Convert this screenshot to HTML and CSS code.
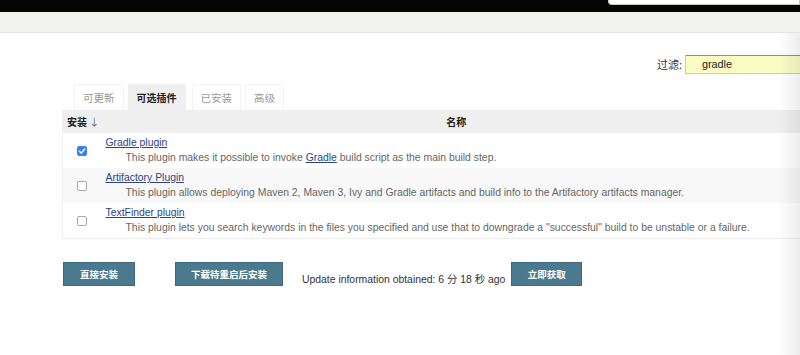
FILE: index.html
```html
<!DOCTYPE html>
<html>
<head lang="zh">
    <meta charset="UTF-8">
    <title>插件管理</title>
    <link rel="stylesheet" href="styles.css">
</head>
<body>
    <div id="page">
        <div class="topbar">
            <div class="search"></div>
        </div>
        <div class="subbar"></div>
        <div class="main">
            <div class="filter">
                <label>过滤:</label><input type="text" class="filterBox" value="gradle">
            </div>
            <div class="tabs">
                <span class="tab">可更新</span>
                <span class="tab active">可选插件</span>
                <span class="tab">已安装</span>
                <span class="tab">高级</span>
            </div>
            <table class="plugins">
                <tr class="head">
                    <th class="colInstall">安装 <span class="arrow">↓</span></th>
                    <th class="colName">名称</th>
                </tr>
                <tr>
                    <td class="colInstall"><span class="check on"><svg width="10" height="10" viewBox="0 0 10 10"><path d="M2.4 5.2 L4.2 7 L7.7 3" fill="none" stroke="#fff" stroke-width="1.4" stroke-linecap="round" stroke-linejoin="round"/></svg></span></td>
                    <td class="colName">
                        <a href="#" class="pName">Gradle plugin</a>
                        <p class="pDesc">This plugin makes it possible to invoke <a href="#">Gradle</a> build script as the main build step.</p>
                    </td>
                </tr>
                <tr class="odd">
                    <td class="colInstall"><span class="check"></span></td>
                    <td class="colName">
                        <a href="#" class="pName">Artifactory Plugin</a>
                        <p class="pDesc">This plugin allows deploying Maven 2, Maven 3, Ivy and Gradle artifacts and build info to the Artifactory artifacts manager.</p>
                    </td>
                </tr>
                <tr>
                    <td class="colInstall"><span class="check"></span></td>
                    <td class="colName">
                        <a href="#" class="pName">TextFinder plugin</a>
                        <p class="pDesc">This plugin lets you search keywords in the files you specified and use that to downgrade a "successful" build to be unstable or a failure.</p>
                    </td>
                </tr>
            </table>
            <div class="actions">
                <span class="btn btnInstall">直接安装</span>
                <span class="btn btnLater">下载待重启后安装</span>
                <span class="updInfo">Update information obtained: 6 分 18 秒 ago</span>
                <span class="btn btnFetch">立即获取</span>
            </div>
        </div>
        <div class="edgeShade"></div>
    </div>
</body>
</html>
```
FILE: styles.css
```css
*{
    margin: 0;
    padding: 0;
    box-sizing: border-box;
}
html, body{
    width: 800px;
    height: 355px;
    overflow: hidden;
    background: #ffffff;
}
body{
    font-family: "Liberation Sans", "Noto Sans CJK SC", sans-serif;
    font-size: 10.4px;
    color: #333333;
}
div#page{
    position: relative;
    width: 800px;
    height: 355px;
}
.topbar{
    height: 12px;
    background: #050505;
    display: flex;
    justify-content: flex-end;
    align-items: flex-start;
}
.search{
    width: 192px;
    height: 5px;
    background: #ffffff;
    border: solid 1px #c8c8c8;
    border-top: none;
    border-radius: 0 0 0 4px;
}
.subbar{
    height: 21px;
    background: #f2f3ee;
    border-bottom: solid 1px #e3e5de;
}
.main{
    padding-left: 62px;
}
.filter{
    display: flex;
    justify-content: flex-end;
    align-items: center;
    margin-top: 21px;
    height: 20px;
}
.filter label{
    font-family: "Noto Sans CJK SC", sans-serif;
    font-size: 11px;
    color: #333333;
    margin-right: 3px;
}
.filterBox{
    width: 115px;
    height: 19px;
    background: #fbfcc4;
    border: solid 1px #c9c9c9;
    border-top-color: #8e8e8e;
    border-right: none;
    padding-left: 16px;
    font-family: "Liberation Sans", sans-serif;
    font-size: 10.8px;
    color: #222222;
    outline: none;
}
.tabs{
    display: flex;
    margin-top: 10px;
    margin-left: 12px;
    height: 26px;
}
.tab{
    font-family: "Noto Sans CJK SC", sans-serif;
    font-size: 10.5px;
    color: #9a9a9a;
    line-height: 25px;
    padding: 0 8px;
    border: solid 1px #f3f3f3;
    border-bottom: none;
    margin-right: 4px;
}
.tab.active{
    background: #efefef;
    border-color: #efefef;
    color: #222222;
    font-weight: bold;
    font-size: 10px;
    padding: 0 8px;
    margin-right: 6px;
}
table.plugins{
    width: 745px;
    border-collapse: collapse;
    border-left: solid 1px #f0f0f0;
    border-bottom: solid 1px #ececec;
}
table.plugins th{
    height: 23px;
    background: #efefef;
    font-family: "Noto Sans CJK SC", sans-serif;
    font-size: 10px;
    color: #222222;
}
th.colInstall{
    width: 43px;
    text-align: left;
    padding-left: 4px;
    white-space: nowrap;
}
.arrow{
    font-weight: normal;
    color: #666666;
}
th.colName{
    text-align: center;
}
table.plugins td{
    vertical-align: middle;
}
td.colInstall{
    text-align: center;
    padding-right: 4px;
}
td.colName{
    padding: 2px 0 2px 0;
}
tr.odd td{
    background: #f8f8f8;
}
.check{
    display: inline-block;
    width: 10px;
    height: 10px;
    border: solid 1px #a9a9a9;
    border-radius: 2px;
    background: #ffffff;
    vertical-align: middle;
}
.check.on{
    background: #3a82f0;
    border-color: #3a82f0;
}
.check svg{
    display: block;
    margin: -1px 0 0 -1px;
}
.pName{
    display: block;
    line-height: 15px;
    color: #2e4386;
    text-decoration: underline;
}
.pDesc{
    line-height: 16px;
    padding-left: 20px;
    color: #666666;
    white-space: nowrap;
}
.pDesc a{
    color: #2e4386;
}
.actions{
    display: flex;
    align-items: flex-end;
    margin-top: 23px;
    padding-left: 1px;
}
.btn{
    display: inline-block;
    height: 24px;
    line-height: 22px;
    background: #4b7a8e;
    border: solid 1px #3f6a7d;
    color: #ffffff;
    font-family: "Noto Sans CJK SC", sans-serif;
    font-weight: bold;
    font-size: 9.5px;
    text-align: center;
}
.btnInstall{
    width: 72px;
}
.btnLater{
    width: 108px;
    margin-left: 40px;
}
.updInfo{
    margin-left: 19px;
    line-height: 14px;
    color: #333333;
    margin-bottom: -1px;
}
.btnFetch{
    width: 71px;
    margin-left: 6px;
}
.edgeShade{
    position: absolute;
    top: 33px;
    right: 0;
    width: 22px;
    height: 322px;
    background: linear-gradient(to right, rgba(0,0,0,0), rgba(0,0,0,0.07));
}
```
